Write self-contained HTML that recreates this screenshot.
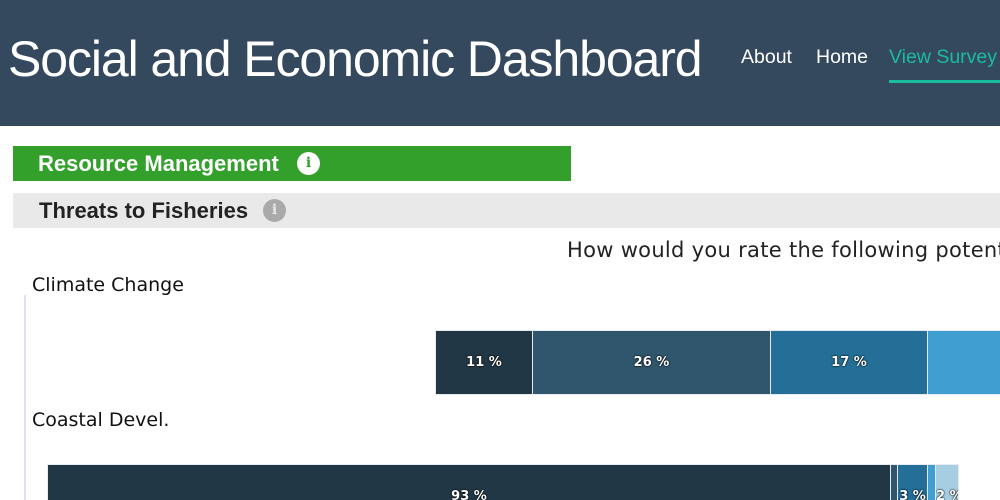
<!DOCTYPE html>
<html><head><style>
*{margin:0;padding:0;box-sizing:border-box}
html,body{width:1000px;height:500px;overflow:hidden}
body{background:#fff;font-family:"Liberation Sans",sans-serif;position:relative}
.hdr{position:absolute;left:0;top:0;width:1000px;height:126px;background:#34495e}
.title{position:absolute;left:8px;top:30px;color:#fff;font-size:50px;white-space:nowrap;letter-spacing:-1.1px}
.nav{position:absolute;top:46px;font-size:19.5px;color:#fff;white-space:nowrap}
.ul{position:absolute;left:889px;top:80px;width:111px;height:3px;background:#1abc9c}
.green{position:absolute;left:13px;top:146px;width:558px;height:35px;background:#33a02c}
.grey{position:absolute;left:13px;top:193px;width:987px;height:35px;background:#e9e9e9}
.sect{position:absolute;font-weight:bold;font-size:22px;white-space:nowrap}
.ic{position:absolute;width:23px;height:23px;border-radius:50%;font:bold 14px "DejaVu Serif",serif;text-align:center;line-height:23px}
.q{position:absolute;left:567px;top:238px;font-size:21px;color:#222;white-space:nowrap;font-family:"DejaVu Sans",sans-serif;letter-spacing:0.3px}
.lbl{position:absolute;left:32px;font-size:19px;color:#111;font-family:"DejaVu Sans",sans-serif;white-space:nowrap}
.axis{position:absolute;left:24px;top:295px;width:2px;height:205px;background:#dde3ec}
.seg{position:absolute;border:1px solid #e6ecf2;color:#fff;font:bold 13px "DejaVu Sans",sans-serif;text-align:center;white-space:nowrap;overflow:hidden;text-shadow:0 0 2px #000,0 0 1px #000}
</style></head><body>
<div class="hdr"></div>
<div class="title">Social and Economic Dashboard</div>
<div class="nav" style="left:741px">About</div>
<div class="nav" style="left:816px">Home</div>
<div class="nav" style="left:889px;color:#1abc9c">View Survey</div>
<div class="ul"></div>
<div class="green"></div>
<div class="sect" style="left:38px;top:151px;color:#fff">Resource Management</div>
<div class="ic" style="left:297px;top:152px;background:#fff;color:#33a02c">i</div>
<div class="grey"></div>
<div class="sect" style="left:39px;top:198px;color:#222">Threats to Fisheries</div>
<div class="ic" style="left:263px;top:199px;background:#aaa;color:#e9e9e9">i</div>
<div class="q">How would you rate the following potential</div>
<div class="lbl" style="top:274px">Climate Change</div>
<div class="lbl" style="top:409px">Coastal Devel.</div>
<div class="axis"></div>
<div class="seg" style="left:435px;top:330px;width:98px;height:65px;line-height:63px;background:#223745">11 %</div>
<div class="seg" style="left:532px;top:330px;width:239px;height:65px;line-height:63px;background:#2f566c">26 %</div>
<div class="seg" style="left:770px;top:330px;width:158px;height:65px;line-height:63px;background:#246f98">17 %</div>
<div class="seg" style="left:927px;top:330px;width:80px;height:65px;background:#409ed0"></div>
<div class="seg" style="left:47px;top:464px;width:844px;height:60px;line-height:63px;background:#223745">93 %</div>
<div class="seg" style="left:890px;top:464px;width:8px;height:60px;background:#2f566c"></div>
<div class="seg" style="left:897px;top:464px;width:31px;height:60px;line-height:63px;background:#246f98">3 %</div>
<div class="seg" style="left:927px;top:464px;width:9px;height:60px;background:#409ed0"></div>
<div class="seg" style="left:935px;top:464px;width:24px;height:60px;line-height:63px;background:#a6cee3">2 %</div>
</body></html>
